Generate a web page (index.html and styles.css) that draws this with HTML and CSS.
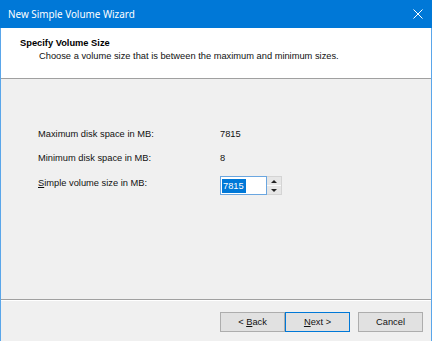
FILE: index.html
```html
<!DOCTYPE html>
<html lang="en">
<head>
  <meta charset="UTF-8" />
  <title>New Simple Volume Wizard</title>
  <link rel="stylesheet" href="styles.css">
</head>
<body>

  <div class="window">
    <div class="titlebar">
      <span class="title">New Simple Volume Wizard</span>
      <svg class="close" width="10" height="10" viewBox="0 0 10 10">
        <path d="M0.5 0.5 L9.5 9.5 M9.5 0.5 L0.5 9.5" stroke="#fff" stroke-width="1" fill="none"/>
      </svg>
    </div>

    <div class="frame">
      <div class="header">
        <div class="heading">Specify Volume Size</div>
        <div class="subheading">Choose a volume size that is between the maximum and minimum sizes.</div>
      </div>

      <div class="fields">
        <div class="row">
          <span class="label">Maximum disk space in MB:</span>
          <span class="value">7815</span>
        </div>
        <div class="row">
          <span class="label">Minimum disk space in MB:</span>
          <span class="value">8</span>
        </div>
        <div class="row row-input">
          <label class="label" for="size"><u>S</u>imple volume size in MB:</label>
          <div class="spin">
            <div class="spin-box" id="size"><span class="selected">7815</span><span class="caret"></span></div>
            <div class="spin-buttons">
              <div class="spin-btn"><span class="arrow-up"></span></div>
              <div class="spin-btn"><span class="arrow-down"></span></div>
            </div>
          </div>
        </div>
      </div>

      <div class="footer">
        <button class="btn">&lt; <u>B</u>ack</button>
        <button class="btn btn-default"><u>N</u>ext &gt;</button>
        <button class="btn btn-cancel">Cancel</button>
      </div>
    </div>
  </div>

</body>
</html>
```

FILE: styles.css
```css
body {
  margin: 0;
  background-color: #fff;
  font-family: "Liberation Sans", Arial, sans-serif;
  font-size: 9.3px;
  color: #111;
}
.window {
  width: 432px;
  height: 341px;
  display: flex;
  flex-direction: column;
}
.titlebar {
  height: 28px;
  background-color: #0078d7;
  color: #fff;
  display: flex;
  align-items: center;
  justify-content: space-between;
  padding: 0 9px 0 8px;
  flex-shrink: 0;
}
.title {
  font-family: "Noto Sans", sans-serif;
  font-size: 9.9px;
}
.close {
  display: block;
  margin-top: -1px;
}
.frame {
  flex: 1;
  display: flex;
  flex-direction: column;
  border-left: 1px solid #5aa6ea;
  border-right: 1px solid #5aa6ea;
  background-color: #f0f0f0;
}
.header {
  height: 51px;
  background-color: #fff;
  border-bottom: 1px solid #a0a0a0;
  padding: 9px 0 0 19px;
  box-sizing: border-box;
  line-height: 13px;
  flex-shrink: 0;
}
.heading {
  font-weight: bold;
  color: #000;
}
.subheading {
  padding-left: 19px;
}
.fields {
  height: 221px;
  box-sizing: border-box;
  padding: 43px 0 0 37px;
  border-bottom: 1px solid #a0a0a0;
  box-shadow: 0 1px 0 #fff;
  flex-shrink: 0;
}
.row {
  display: flex;
  height: 24px;
  line-height: 24px;
}
.row .label {
  width: 182px;
}
.row-input {
  margin-top: 6px;
  line-height: 13px;
}
.row-input .label {
  margin-top: 1px;
}
.spin {
  display: flex;
  height: 19px;
}
.spin-box {
  width: 47px;
  height: 19px;
  box-sizing: border-box;
  border: 1px solid #6aa6e0;
  background-color: #fff;
  padding: 2px 0 0 1px;
  display: flex;
  align-items: flex-start;
}
.selected {
  background-color: #0078d7;
  color: #fff;
  line-height: 14px;
  padding: 0 1px;
}
.caret {
  width: 1px;
  height: 14px;
  background-color: #0078d7;
}
.spin-buttons {
  width: 15px;
  display: flex;
  flex-direction: column;
  border: 1px solid #d4d4d4;
  border-left: none;
  box-sizing: border-box;
}
.spin-btn {
  flex: 1;
  background-color: #e6e6e6;
  display: flex;
  align-items: center;
  justify-content: center;
}
.spin-btn + .spin-btn {
  border-top: 1px solid #fafafa;
}
.arrow-up, .arrow-down {
  width: 0;
  height: 0;
  border-left: 3px solid transparent;
  border-right: 3px solid transparent;
}
.arrow-up {
  border-bottom: 3px solid #222;
}
.arrow-down {
  border-top: 3px solid #222;
}
.footer {
  flex: 1;
  display: flex;
  justify-content: flex-end;
  align-items: flex-start;
  padding: 12px 8px 0 0;
}
.btn {
  width: 65px;
  height: 20px;
  background-color: #e1e1e1;
  border: 1px solid #adadad;
  font-family: "Liberation Sans", Arial, sans-serif;
  font-size: 9.3px;
  color: #111;
  padding: 0;
}
.btn-default {
  border-color: #0078d7;
}
.btn-cancel {
  margin-left: 8px;
}
```
